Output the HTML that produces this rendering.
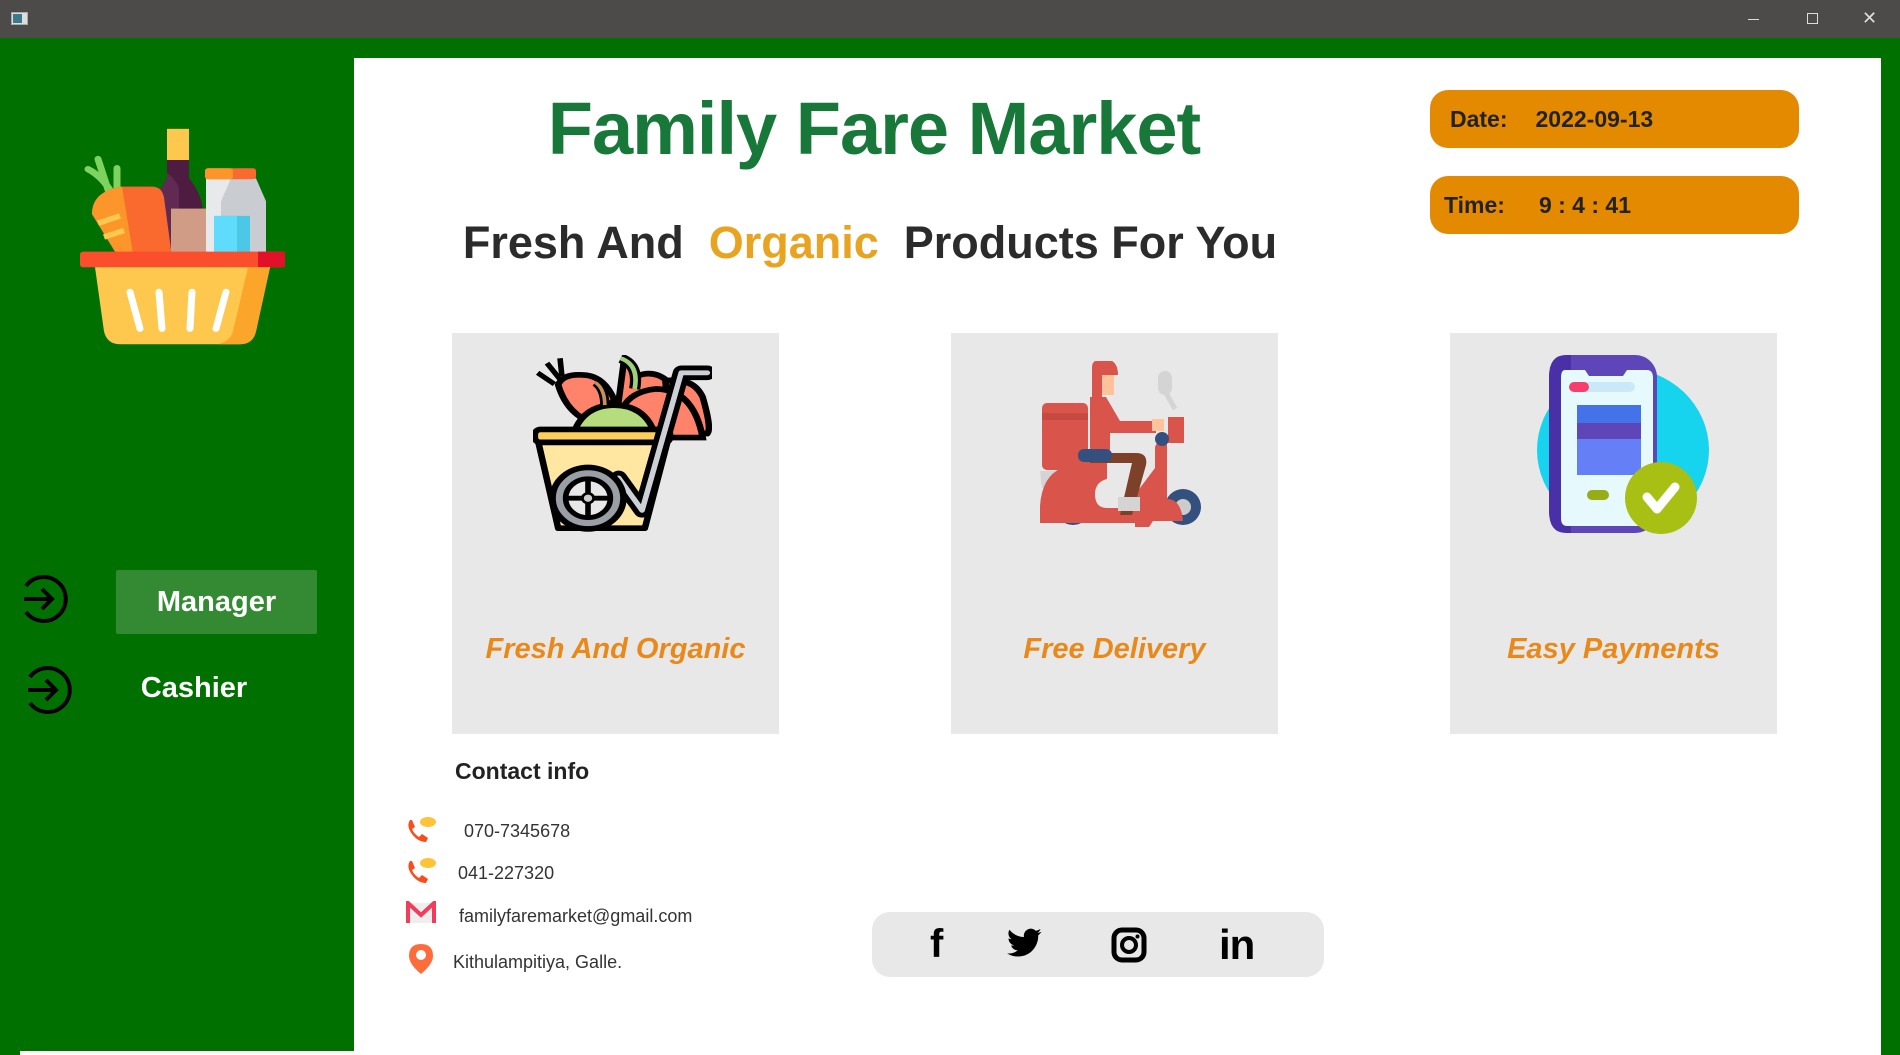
<!DOCTYPE html>
<html><head><meta charset="utf-8"><style>
*{margin:0;padding:0;box-sizing:border-box}
body{width:1900px;height:1055px;overflow:hidden;background:#007000;font-family:"Liberation Sans",sans-serif;position:relative}
.abs{position:absolute}
.tb{left:0;top:0;width:1900px;height:38px;background:#4d4b49}
.main{left:354px;top:58px;width:1527px;height:997px;background:#fff}
.card{background:#e8e8e8;width:327px;height:401px;top:333px}
.cap{position:absolute;left:0;right:0;top:300px;text-align:center;color:#e8891a;font-style:italic;font-weight:bold;font-size:29px}
.pill{background:#e38a00;border-radius:18px;width:369px;height:58px;left:1430px;color:#222;font-weight:bold;font-size:23px}
.ct{font-size:18px;color:#333}
</style></head><body>
<div class="abs tb">
 <div class="abs" style="left:11px;top:12px;width:17px;height:13px;background:#ddd;border:1px solid #aaa"><div style="width:9px;height:9px;background:#3a7a8a;margin:1px"></div></div>
 <div class="abs" style="left:1748px;top:19px;width:11px;height:1px;background:#ddd"></div>
 <div class="abs" style="left:1807px;top:13px;width:11px;height:11px;border:1px solid #ddd"></div>
 <div class="abs" style="left:1862px;top:8px;color:#ddd;font-size:18px">✕</div>
</div>
<div class="abs" style="left:20px;top:1051px;width:334px;height:4px;background:#fff"></div>
<!-- basket -->
<svg class="abs" style="left:80px;top:127px" width="205" height="220" viewBox="0 0 205 240" preserveAspectRatio="none">
 <rect x="87" y="2" width="22" height="34" fill="#fec84f"/>
 <path d="M87 36h22v20q14 18 14 40v50H75V96q0-22 12-40z" fill="#4d1c40"/>
 <path d="M87 36v20q-12 18-12 40v50h24V70q0-10-12-20z" fill="#612a52"/>
 <rect x="91" y="89" width="36" height="50" fill="#d09c85"/>
 <path d="M126 56h50l10 25v60h-60V81z" fill="#c9ccd0"/>
 <path d="M126 56h25l-10 25v60h-15V81z" fill="#e8e9eb"/>
 <rect x="125" y="45" width="51" height="12" rx="3" fill="#fa6a2e"/>
 <rect x="125" y="45" width="28" height="12" rx="3" fill="#fd962a"/>
 <rect x="134" y="97" width="36" height="44" fill="#4ac8e6"/><rect x="134" y="97" width="23" height="44" fill="#5fdbfc"/>
 <path d="M8 46q15 8 26 30M18 35l12 40M37 45v30" stroke="#7ed35e" stroke-width="7" fill="none" stroke-linecap="round"/>
 <path d="M12 95q0-25 30-30h30q10 0 12 12l8 65H40z" fill="#fa6a2e"/>
 <path d="M12 95q0-25 30-30l12 80H40z" fill="#fd962a"/>
 <path d="M18 105l22-8M24 120l20-7" stroke="#fec84f" stroke-width="6"/>
 <rect x="0" y="136" width="205" height="17" rx="3" fill="#fa4e2c"/><rect x="178" y="136" width="27" height="17" fill="#e3102a"/>
 <path d="M15 153h175l-14 70q-3 14-16 14H40q-13 0-16-14z" fill="#fec84f"/>
 <path d="M168 153h22l-14 70q-3 14-16 14h-22q12-3 15-14z" fill="#fba52a"/>
 <path d="M50 180l10 40M79 180l3 40M112 180l-2 40M146 180l-10 40" stroke="#fff" stroke-width="7" stroke-linecap="round"/>
</svg>
<!-- nav -->
<svg class="abs" style="left:16px;top:572px" width="56" height="54" viewBox="0 0 56 54"><path d="M10 14A22 22 0 1 1 10 40" fill="none" stroke="#000" stroke-width="4"/><path d="M8 27h28M26 17l10 10-10 10" fill="none" stroke="#000" stroke-width="4"/></svg>
<svg class="abs" style="left:20px;top:663px" width="56" height="54" viewBox="0 0 56 54"><path d="M10 14A22 22 0 1 1 10 40" fill="none" stroke="#000" stroke-width="4"/><path d="M8 27h28M26 17l10 10-10 10" fill="none" stroke="#000" stroke-width="4"/></svg>
<div class="abs" style="left:116px;top:570px;width:201px;height:64px;background:#338a33;border-radius:2px;color:#fff;font-weight:bold;font-size:29px;text-align:center;line-height:64px">Manager</div>
<div class="abs" style="left:114px;top:672px;width:160px;color:#fff;font-weight:bold;font-size:29px;text-align:center">Cashier</div>
<div class="abs" style="left:1881px;top:38px;width:19px;height:1017px;background:#007000"></div>
<div class="abs main"></div>
<div class="abs" style="left:454px;top:86px;width:840px;text-align:center;color:#17783a;font-weight:bold;font-size:74px;letter-spacing:-1px">Family Fare Market</div>
<div class="abs" style="left:420px;top:217px;width:900px;text-align:center;color:#2b2b2b;font-weight:bold;font-size:45px;white-space:nowrap">Fresh And&nbsp; <span style="color:#e8a320">Organic</span>&nbsp; Products For You</div>
<div class="abs pill" style="top:90px;line-height:58px"><span style="margin-left:20px">Date:</span><span style="margin-left:28px">2022-09-13</span></div>
<div class="abs pill" style="top:176px;line-height:58px"><span style="margin-left:14px">Time:</span><span style="margin-left:34px">9 : 4 : 41</span></div>
<div class="abs card" style="left:452px"><div class="cap">Fresh And Organic</div>
<svg class="abs" style="left:81px;top:22px" width="179" height="178" viewBox="3 8 192 220" preserveAspectRatio="none">
 <path d="M8 30l18 14M18 18l14 20M32 12l2 22" stroke="#000" stroke-width="6"/>
 <path d="M30 45q5-15 30-12 20 3 30 30l-20 30q-30-10-40-48z" fill="#ff826b" stroke="#000" stroke-width="7"/>
 <path d="M100 20q10 0 12 15 20-10 35 5l10 20 5 30-30 10-40-10z" fill="#ff826b" stroke="#000" stroke-width="7"/>
 <path d="M145 40q30-5 40 20 10 40 5 45h-40z" fill="#ff826b" stroke="#000" stroke-width="7"/>
 <path d="M95 110q-5-55 40-60 40 0 50 60z" fill="#ff826b" stroke="#000" stroke-width="7"/>
 <path d="M112 50q5-30 -15-38" stroke="#000" stroke-width="12" fill="none"/><path d="M112 50q5-30 -15-38" stroke="#9fd07a" stroke-width="5" fill="none"/>
 <path d="M45 110q10-40 45-40 35 0 45 40z" fill="#b5dd7e" stroke="#000" stroke-width="7"/>
 <path d="M80 70q0-20-10-28" stroke="#000" stroke-width="10" fill="none"/><path d="M80 70q0-20-10-28" stroke="#c4915a" stroke-width="4" fill="none"/>
 <path d="M8 112h140l-25 110H30z" fill="#ffe7a2" stroke="#000" stroke-width="7" stroke-linejoin="round"/>
 <rect x="5" y="100" width="145" height="16" rx="6" fill="#ffcf5c" stroke="#000" stroke-width="7"/>
 <path d="M190 30h-28l-42 170-25-40" fill="none" stroke="#000" stroke-width="18" stroke-linejoin="round" stroke-linecap="round"/>
 <path d="M190 30h-28l-42 170-25-40" fill="none" stroke="#cdd1d7" stroke-width="6" stroke-linejoin="round" stroke-linecap="round"/>
 <circle cx="62" cy="185" r="38" fill="#9a9ea5" stroke="#000" stroke-width="7"/><circle cx="62" cy="185" r="24" fill="#e8e8e8" stroke="#000" stroke-width="6"/>
 <path d="M62 162v46M39 185h46" stroke="#000" stroke-width="6"/><circle cx="62" cy="185" r="6" fill="#ccc" stroke="#000" stroke-width="3"/>
</svg></div>
<div class="abs card" style="left:951px"><div class="cap">Free Delivery</div>
<svg class="abs" style="left:89px;top:28px" width="166" height="166" viewBox="0 0 166 166">
 <rect x="2" y="42" width="46" height="67" rx="5" fill="#d9544a"/><rect x="2" y="52" width="46" height="7" fill="#c64a40"/>
 <path d="M0 110h48l10 5v12H2z" fill="#d4d4d4"/>
 <rect x="118" y="10" width="14" height="24" rx="7" fill="#d4d4d4"/><path d="M125 30l10 18" stroke="#d4d4d4" stroke-width="5"/>
 <circle cx="33" cy="146" r="18" fill="#34507e"/><circle cx="33" cy="146" r="7" fill="#e8e8e8"/>
 <circle cx="143" cy="146" r="18" fill="#34507e"/><circle cx="143" cy="146" r="8" fill="#ccc"/>
 <path d="M0 145q2-30 22-38h25v-7h20v18q-12 3-12 15 0 14 12 14h18l30-40V86q2-6 10-8h2v60q14 0 16 22h-30l-8 12h-10v-10H0z" fill="#d9544a"/>
 <rect x="128" y="56" width="16" height="26" fill="#d9544a"/>
 <path d="M52 6q0-8 12-8 14 0 14 16H62v22h-10z" fill="#d9544a"/><rect x="62" y="14" width="12" height="20" fill="#ffc39b"/>
 <path d="M50 36h16l14 24h36v12H70v24H50z" fill="#d9544a"/><rect x="112" y="58" width="12" height="12" fill="#ffc39b"/>
 <path d="M50 92h46q12 0 10 12l-14 50h-12l12-52H50z" fill="#7d4129"/>
 <rect x="38" y="88" width="34" height="13" rx="6" fill="#34507e"/><circle cx="122" cy="78" r="7" fill="#34507e"/>
 <rect x="78" y="136" width="22" height="14" fill="#d4d4d4"/>
</svg></div>
<div class="abs card" style="left:1450px"><div class="cap">Easy Payments</div>
<svg class="abs" style="left:85px;top:22px" width="175" height="180" viewBox="0 0 175 180">
 <ellipse cx="88" cy="95" rx="86" ry="82" fill="#16d4ee"/>
 <rect x="14" y="0" width="108" height="178" rx="22" fill="#5e45b8"/><path d="M36 0h-5q-17 0-17 22v134q0 22 17 22h5z" fill="#4a30a6"/>
 <path d="M30 15h20l4 6h34l4-6h20q6 0 6 8v140q0 8-8 8H32q-6 0-6-8V23q0-8 4-8z" fill="#e6f9fc"/>
 <rect x="34" y="27" width="66" height="10" rx="5" fill="#c9e9f8"/><rect x="34" y="27" width="20" height="10" rx="5" fill="#f63f6d"/>
 <rect x="42" y="50" width="64" height="70" fill="#6580f7"/><rect x="42" y="50" width="64" height="18" fill="#4472e8"/><rect x="42" y="68" width="64" height="16" fill="#5e45b8"/>
 <rect x="52" y="135" width="22" height="10" rx="5" fill="#97ad15"/>
 <ellipse cx="126" cy="143" rx="36" ry="36" fill="#a8bf13"/>
 <path d="M112 142l10 12 18-22" stroke="#fff" stroke-width="9" fill="none" stroke-linecap="round" stroke-linejoin="round"/>
</svg></div>
<div class="abs" style="left:455px;top:758px;font-weight:bold;font-size:23px;color:#222">Contact info</div>
<svg class="abs" style="left:406px;top:816px" width="30" height="28" viewBox="0 0 30 28"><path d="M4 4q-4 6 2 14t14 8l2-4-6-4-3 3q-5-3-7-8l3-2-3-7z" fill="#f94e1c"/><ellipse cx="22" cy="6" rx="8" ry="5" fill="#fec337"/></svg>
<svg class="abs" style="left:406px;top:857px" width="30" height="28" viewBox="0 0 30 28"><path d="M4 4q-4 6 2 14t14 8l2-4-6-4-3 3q-5-3-7-8l3-2-3-7z" fill="#f94e1c"/><ellipse cx="22" cy="6" rx="8" ry="5" fill="#fec337"/></svg>
<svg class="abs" style="left:406px;top:901px" width="30" height="24" viewBox="0 0 30 24"><rect x="1" y="2" width="28" height="20" fill="#eee"/><path d="M2 22V2l13 12L28 2v20" stroke="#f33c5a" stroke-width="4" fill="none"/></svg>
<svg class="abs" style="left:408px;top:943px" width="26" height="32" viewBox="0 0 26 32"><path d="M13 1q12 0 12 12 0 8-12 18Q1 21 1 13 1 1 13 1z" fill="#fd6c3d"/><circle cx="13" cy="12" r="5" fill="#fff"/></svg>
<div class="abs ct" style="left:464px;top:821px">070-7345678</div>
<div class="abs ct" style="left:458px;top:863px">041-227320</div>
<div class="abs ct" style="left:459px;top:906px">familyfaremarket@gmail.com</div>
<div class="abs ct" style="left:453px;top:952px">Kithulampitiya, Galle.</div>
<div class="abs" style="left:872px;top:912px;width:452px;height:65px;background:#e8e8e8;border-radius:18px"></div>
<div class="abs" style="left:930px;top:922px;font-size:40px;font-weight:bold;color:#000">f</div>
<svg class="abs" style="left:1007px;top:928px" width="36" height="30" viewBox="0 0 24 20"><path d="M23 2.5a9 9 0 0 1-2.7.8 4.7 4.7 0 0 0 2-2.6 9.400 9.400 0 0 1-3 1.2A4.7 4.700 0 0 0 11.300 6.100 13.400 13.400 0 0 1 1.600 1.200a4.700 4.700 0 0 0 1.500 6.300A4.700 4.700 0 0 1 1 6.900a4.700 4.700 0 0 0 3.800 4.600 4.700 4.700 0 0 1-2.100.1 4.700 4.700 0 0 0 4.400 3.300A9.500 9.500 0 0 1 0 16.900a13.400 13.400 0 0 0 7.300 2.100c8.700 0 13.500-7.200 13.500-13.500v-.6A9.600 9.600 0 0 0 23 2.500z"/></svg>
<svg class="abs" style="left:1111px;top:927px" width="36" height="36" viewBox="0 0 36 36"><rect x="3" y="3" width="30" height="30" rx="8" fill="none" stroke="#000" stroke-width="5"/><circle cx="18" cy="18" r="7" fill="none" stroke="#000" stroke-width="4"/><circle cx="26.500" cy="9.500" r="2" fill="#000"/></svg>
<div class="abs" style="left:1219px;top:921px;font-size:42px;font-weight:bold;color:#000;letter-spacing:-1px">in</div>
</body></html>
